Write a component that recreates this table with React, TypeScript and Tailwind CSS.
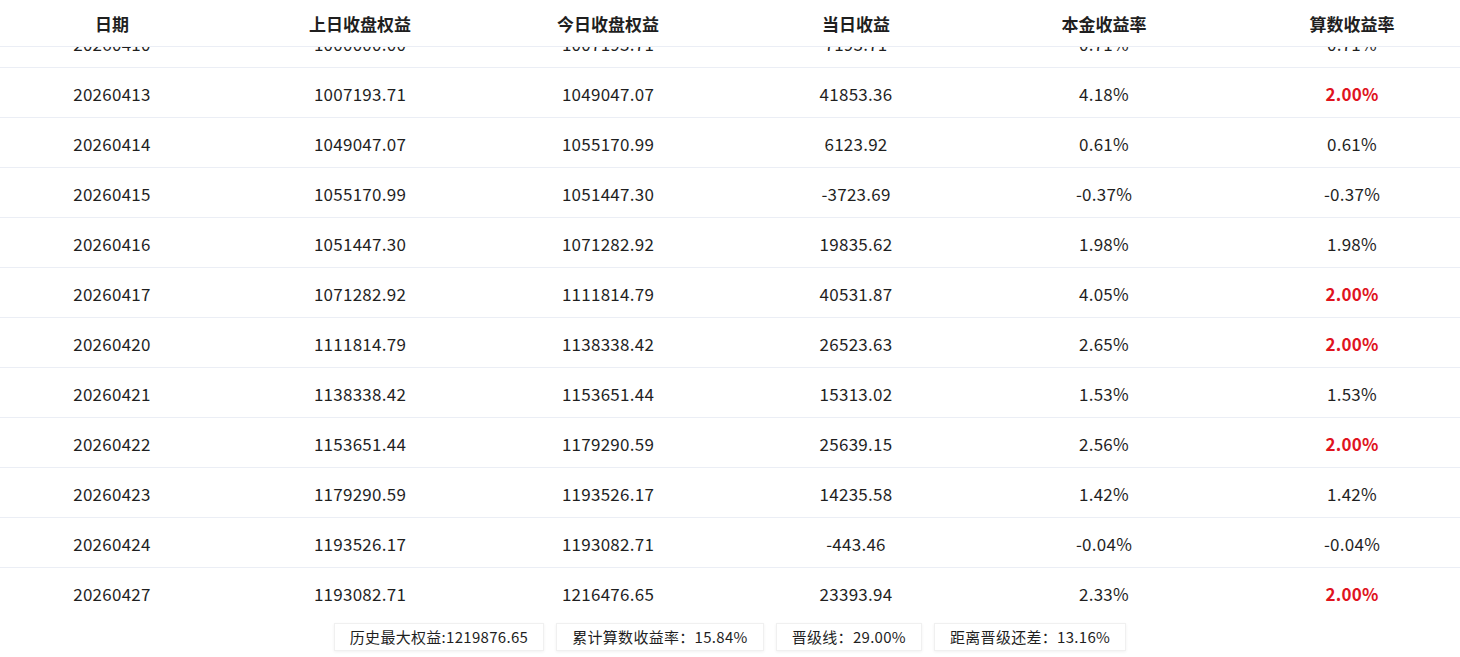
import React from 'react';

type Row = {
    date: string;
    prev: string;
    today: string;
    profit: string;
    rate: string;
    calcRate: string;
    capped?: boolean;
};

const rows: Row[] = [
    { date: '20260410', prev: '1000000.00', today: '1007193.71', profit: '7193.71', rate: '0.71%', calcRate: '0.71%' },
    { date: '20260413', prev: '1007193.71', today: '1049047.07', profit: '41853.36', rate: '4.18%', calcRate: '2.00%', capped: true },
    { date: '20260414', prev: '1049047.07', today: '1055170.99', profit: '6123.92', rate: '0.61%', calcRate: '0.61%' },
    { date: '20260415', prev: '1055170.99', today: '1051447.30', profit: '-3723.69', rate: '-0.37%', calcRate: '-0.37%' },
    { date: '20260416', prev: '1051447.30', today: '1071282.92', profit: '19835.62', rate: '1.98%', calcRate: '1.98%' },
    { date: '20260417', prev: '1071282.92', today: '1111814.79', profit: '40531.87', rate: '4.05%', calcRate: '2.00%', capped: true },
    { date: '20260420', prev: '1111814.79', today: '1138338.42', profit: '26523.63', rate: '2.65%', calcRate: '2.00%', capped: true },
    { date: '20260421', prev: '1138338.42', today: '1153651.44', profit: '15313.02', rate: '1.53%', calcRate: '1.53%' },
    { date: '20260422', prev: '1153651.44', today: '1179290.59', profit: '25639.15', rate: '2.56%', calcRate: '2.00%', capped: true },
    { date: '20260423', prev: '1179290.59', today: '1193526.17', profit: '14235.58', rate: '1.42%', calcRate: '1.42%' },
    { date: '20260424', prev: '1193526.17', today: '1193082.71', profit: '-443.46', rate: '-0.04%', calcRate: '-0.04%' },
    { date: '20260427', prev: '1193082.71', today: '1216476.65', profit: '23393.94', rate: '2.33%', calcRate: '2.00%', capped: true },
];

const headers = ['日期', '上日收盘权益', '今日收盘权益', '当日收益', '本金收益率', '算数收益率'];

const summary = [
    '历史最大权益:1219876.65',
    '累计算数收益率：15.84%',
    '晋级线：29.00%',
    '距离晋级还差：13.16%',
];

const fontStack = "font-['Noto_Sans_CJK_SC',sans-serif]";

const App: React.FC = () => {
    return (
        <div className={`w-[1460px] h-[657px] bg-white overflow-hidden text-[#1f1f1f] ${fontStack}`}>
            <div className="w-[1488px] ml-[-12px]">
                {/* header */}
                <div className="grid grid-cols-[repeat(6,248px)] h-[47px] pt-[2px] border-b border-[#ebeef5] bg-white relative z-10">
                    {headers.map((h) => (
                        <div key={h} className="flex items-center justify-center text-[17px] font-bold">
                            {h}
                        </div>
                    ))}
                </div>

                {/* body, scrolled a bit */}
                <div className="h-[570px] overflow-hidden">
                    <div className="mt-[-29px]">
                        {rows.map((r) => (
                            <div key={r.date} className="grid grid-cols-[repeat(6,248px)] h-[50px] pt-[3px] border-b border-[#ebeef5] text-[17px] tracking-[0.25px]">
                                <div className="flex items-center justify-center">{r.date}</div>
                                <div className="flex items-center justify-center">{r.prev}</div>
                                <div className="flex items-center justify-center">{r.today}</div>
                                <div className="flex items-center justify-center">{r.profit}</div>
                                <div className="flex items-center justify-center">{r.rate}</div>
                                <div className={`flex items-center justify-center ${r.capped ? 'text-[#e0141e] font-bold' : ''}`}>
                                    {r.calcRate}
                                </div>
                            </div>
                        ))}
                    </div>
                </div>
            </div>

            {/* summary bar */}
            <div className="h-[40px] flex items-center justify-center gap-3">
                {summary.map((s) => (
                    <div key={s} className="h-[28px] px-[15px] flex items-center border border-[#f0f0f0] shadow-[0_1px_3px_rgba(0,0,0,0.06)] text-[15px] tracking-[0.3px]">
                        {s}
                    </div>
                ))}
            </div>
        </div>
    );
};

export default App;
